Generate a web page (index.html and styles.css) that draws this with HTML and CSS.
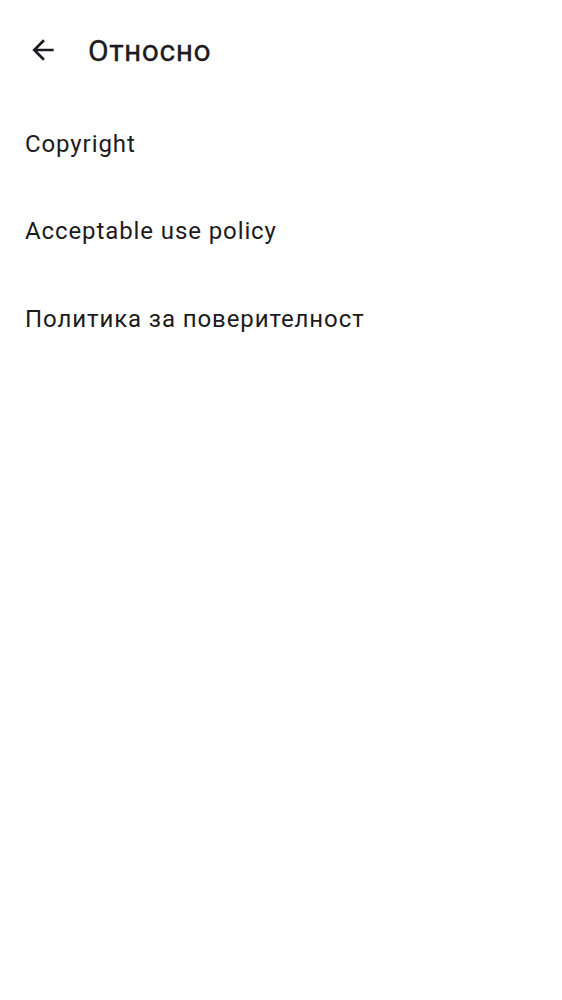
FILE: index.html
```html
<!DOCTYPE html>
<html lang="bg">
<head>
<meta charset="utf-8">
<link rel="stylesheet" href="styles.css">
</head>
<body>
<header class="appbar">
  <span class="back">
    <svg viewBox="0 0 24 24" width="32" height="32"><path d="M20 11H7.83l5.59-5.59L12 4l-8 8 8 8 1.41-1.41L7.83 13H20v-2z" fill="currentColor"/></svg>
  </span>
  <h1 class="title">Относно</h1>
</header>
<ul class="list">
  <li class="item">Copyright</li>
  <li class="item">Acceptable use policy</li>
  <li class="item">Политика за поверителност</li>
</ul>
</body>
</html>
```
FILE: styles.css
```css
html, body { margin: 0; padding: 0; background: #fff; }
body { font-family: Roboto, "Noto Sans", sans-serif; color: #1d1b20; }
.appbar { display: flex; align-items: center; height: 100px; padding-left: 27px; }
.back { display: flex; width: 32px; height: 32px; color: #1d1b20; }
.title { margin: 0 0 0 29px; font-size: 30px; font-weight: 400; letter-spacing: 0.5px; -webkit-text-stroke: 0.3px #1d1b20; }
.list { list-style: none; margin: 0; padding: 0; }
.item { height: 87.5px; display: flex; align-items: center; padding-left: 25px; font-size: 24px; letter-spacing: 0.9px; }
```
